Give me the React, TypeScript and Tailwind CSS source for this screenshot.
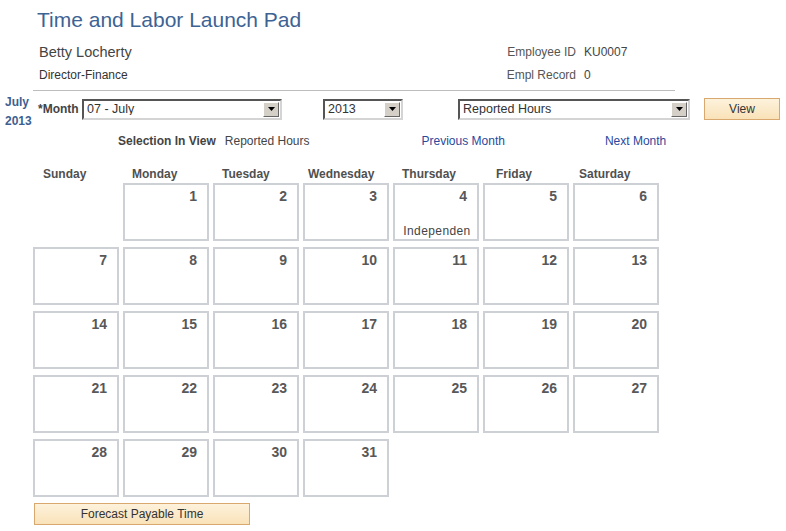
const days = [
  { label: "Sunday", pad: "pl-[10px]" },
  { label: "Monday", pad: "pl-[9px]" },
  { label: "Tuesday", pad: "pl-[9px]" },
  { label: "Wednesday", pad: "pl-[5px]" },
  { label: "Thursday", pad: "pl-[9px]" },
  { label: "Friday", pad: "pl-[13px]" },
  { label: "Saturday", pad: "pl-[6px]" },
];

// July 2013 starts on a Monday
const cells: (number | null)[] = [null, ...Array.from({ length: 31 }, (_, i) => i + 1)];

const holidays: Record<number, string> = { 4: "Independen" };

function Select({ value, width }: { value: string; width: string }) {
  return (
    <div
      className={`${width} flex h-[21px] items-center border-2 border-t-[#555] border-l-[#555] border-b-[#d4d4d4] border-r-[#d4d4d4] bg-white`}
    >
      <span className="flex-1 truncate pl-[3px] text-[12.5px] leading-none text-[#333]">{value}</span>
      <span className="mr-[1px] flex h-[15px] w-[16px] items-center justify-center border border-t-white border-l-white border-b-[#666] border-r-[#666] bg-[#d4d0c8]">
        <svg width="7" height="4" viewBox="0 0 7 4">
          <path d="M0 0h7L3.5 4z" fill="#000" />
        </svg>
      </span>
    </div>
  );
}

export default function App() {
  return (
    <div className="h-[531px] w-[786px] overflow-hidden bg-white font-['Liberation_Sans',Arial,sans-serif] text-[#333]">
      <h1 className="pl-[37px] pt-[8px] text-[21px] leading-[24px] text-[#3d6394]">Time and Labor Launch Pad</h1>

      <div className="mt-[11px] flex">
        <div className="w-[400px] pl-[39px]">
          <p className="text-[14.5px] leading-[18px] text-[#444]">Betty Locherty</p>
          <p className="mt-[5px] text-[12px] leading-[18px] text-[#333]">Director-Finance</p>
        </div>
        <div className="flex flex-col gap-[5px] pl-[78px] text-[12px] leading-[18px]">
          <div className="flex">
            <span className="w-[98px] text-right text-[#555]">Employee ID</span>
            <span className="pl-[8px] text-[#444]">KU0007</span>
          </div>
          <div className="flex">
            <span className="w-[98px] text-right text-[#555]">Empl Record</span>
            <span className="pl-[8px] text-[#444]">0</span>
          </div>
        </div>
      </div>

      <div className="ml-[33px] mt-[6px] h-px w-[642px] bg-[#bdbdbd]" />

      <div className="mt-[2px] flex items-start">
        <div className="w-[33px] pl-[5px] text-[12px] font-bold leading-[19px] text-[#3d5f92]">
          <p>July</p>
          <p>2013</p>
        </div>
        <div className="mt-[5px] flex items-center">
          <span className="w-[49px] pl-[5px] text-[12px] font-bold text-[#444]">*Month</span>
          <Select value="07 - July" width="w-[200px]" />
          <span className="w-[41px]" />
          <Select value="2013" width="w-[80px]" />
          <span className="w-[55px]" />
          <Select value="Reported Hours" width="w-[232px]" />
          <span className="w-[14px]" />
          <button className="h-[22px] w-[76px] border border-[#d9a86e] bg-gradient-to-b from-[#fdf2dc] to-[#f9e2b8] text-[12px] text-[#333]">
            View
          </button>
        </div>
      </div>

      <div className="mt-[1px] flex text-[12px] leading-[18px]">
        <span className="pl-[118px] font-bold text-[#444]">Selection In View</span>
        <span className="pl-[9px] text-[#444]">Reported Hours</span>
        <a className="pl-[112px] text-[#284a9c]">Previous Month</a>
        <a className="pl-[100px] text-[#284a9c]">Next Month</a>
      </div>

      <div className="ml-[33px] mt-[16px] grid grid-cols-[repeat(7,86px)] gap-x-[4px]">
        {days.map((d) => (
          <span key={d.label} className={`${d.pad} text-[12px] font-bold leading-[16px] text-[#505050]`}>
            {d.label}
          </span>
        ))}
      </div>

      <div className="ml-[33px] mt-[1px] grid grid-cols-[repeat(7,86px)] grid-rows-[repeat(5,58px)] gap-x-[4px] gap-y-[6px]">
        {cells.map((n, i) =>
          n === null ? (
            <div key={i} />
          ) : (
            <div key={i} className="flex flex-col border-2 border-[#cdd0d5] bg-white">
              <span className="pr-[10px] pt-[3px] text-right text-[14px] font-bold leading-[16px] text-[#585858]">
                {n}
              </span>
              {holidays[n] && (
                <span className="mt-[20px] pl-[2px] text-center text-[12px] leading-[14px] tracking-[0.4px] text-[#444]">
                  {holidays[n]}
                </span>
              )}
            </div>
          )
        )}
      </div>

      <button className="ml-[34px] mt-[6px] h-[22px] w-[216px] border border-[#d9a86e] bg-gradient-to-b from-[#fdf2dc] to-[#f9e2b8] text-[12px] text-[#333]">
        Forecast Payable Time
      </button>
    </div>
  );
}
